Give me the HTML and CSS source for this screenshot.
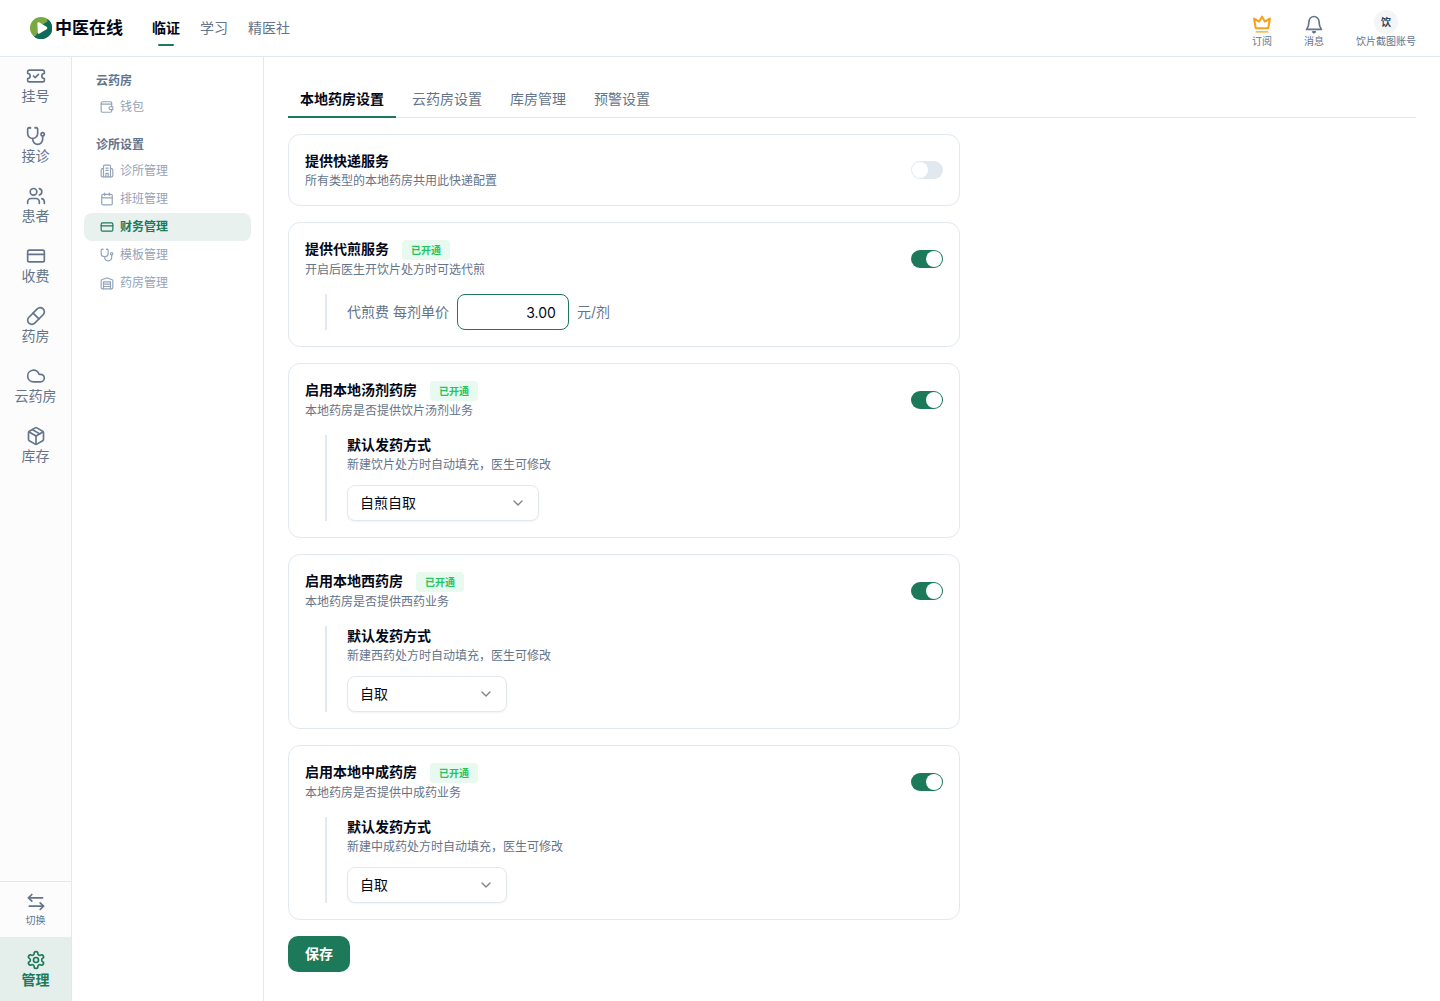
FILE: index.html
```html
<!DOCTYPE html>
<html lang="zh-CN">
<head>
<meta charset="utf-8">
<meta name="viewport" content="width=device-width, initial-scale=1">
<title>中医在线 - 财务管理</title>
<link rel="stylesheet" href="styles.css">
</head>
<body>
<svg class="sprite" aria-hidden="true">
  <symbol id="i-ticket" viewBox="0 0 24 24"><path d="M2 9a3 3 0 1 1 0 6v2a2 2 0 0 0 2 2h16a2 2 0 0 0 2-2v-2a3 3 0 1 1 0-6V7a2 2 0 0 0-2-2H4a2 2 0 0 0-2 2Z"/><path d="m9 12 2 2 4-4"/></symbol>
  <symbol id="i-steth" viewBox="0 0 24 24"><path d="M4.800 2.300A.3.3 0 1 0 5 2H4a2 2 0 0 0-2 2v5a6 6 0 0 0 6 6 6 6 0 0 0 6-6V4a2 2 0 0 0-2-2h-1a.2.2 0 1 0 .3.3"/><path d="M8 15v1a6 6 0 0 0 6 6 6 6 0 0 0 6-6v-4"/><circle cx="20" cy="10" r="2"/></symbol>
  <symbol id="i-users" viewBox="0 0 24 24"><path d="M16 21v-2a4 4 0 0 0-4-4H6a4 4 0 0 0-4 4v2"/><circle cx="9" cy="7" r="4"/><path d="M22 21v-2a4 4 0 0 0-3-3.870"/><path d="M16 3.130a4 4 0 0 1 0 7.750"/></symbol>
  <symbol id="i-card" viewBox="0 0 24 24"><rect width="20" height="14" x="2" y="5" rx="2"/><path d="M2 10h20"/></symbol>
  <symbol id="i-pill" viewBox="0 0 24 24"><path d="m10.500 20.500 10-10a4.950 4.950 0 1 0-7-7l-10 10a4.950 4.950 0 1 0 7 7Z"/><path d="m8.500 8.500 7 7"/></symbol>
  <symbol id="i-cloud" viewBox="0 0 24 24"><path d="M17.500 19H9a7 7 0 1 1 6.710-9h1.790a4.500 4.500 0 1 1 0 9Z"/></symbol>
  <symbol id="i-package" viewBox="0 0 24 24"><path d="M11 21.730a2 2 0 0 0 2 0l7-4A2 2 0 0 0 21 16V8a2 2 0 0 0-1-1.730l-7-4a2 2 0 0 0-2 0l-7 4A2 2 0 0 0 3 8v8a2 2 0 0 0 1 1.730z"/><path d="M12 22V12"/><path d="M3.290 7 12 12l8.710-5"/><path d="m7.500 4.270 9 5.150"/></symbol>
  <symbol id="i-swap" viewBox="0 0 24 24"><path d="M7 3 3 7l4 4"/><path d="M3 7h17"/><path d="m17 21 4-4-4-4"/><path d="M21 17H4"/></symbol>
  <symbol id="i-gear" viewBox="0 0 24 24"><path d="M12.220 2h-.440a2 2 0 0 0-2 2v.180a2 2 0 0 1-1 1.730l-.430.250a2 2 0 0 1-2 0l-.150-.080a2 2 0 0 0-2.730.730l-.220.380a2 2 0 0 0 .730 2.730l.150.100a2 2 0 0 1 1 1.720v.510a2 2 0 0 1-1 1.740l-.150.090a2 2 0 0 0-.730 2.730l.220.380a2 2 0 0 0 2.730.730l.150-.080a2 2 0 0 1 2 0l.430.250a2 2 0 0 1 1 1.730V20a2 2 0 0 0 2 2h.440a2 2 0 0 0 2-2v-.180a2 2 0 0 1 1-1.730l.430-.250a2 2 0 0 1 2 0l.150.080a2 2 0 0 0 2.730-.730l.220-.390a2 2 0 0 0-.730-2.730l-.150-.080a2 2 0 0 1-1-1.740v-.500a2 2 0 0 1 1-1.740l.150-.090a2 2 0 0 0 .730-2.730l-.220-.380a2 2 0 0 0-2.730-.730l-.150.080a2 2 0 0 1-2 0l-.430-.250a2 2 0 0 1-1-1.730V4a2 2 0 0 0-2-2z"/><circle cx="12" cy="12" r="3"/></symbol>
  <symbol id="i-wallet" viewBox="0 0 24 24"><path d="M20 11V5a2 2 0 0 0-2-2H4a2 2 0 0 0-2 2v14a2 2 0 0 0 2 2h14a2 2 0 0 0 2-2v-2"/><path d="M2 7h18"/><path d="M18 11.500a2.500 2.500 0 0 0 0 5h4v-5Z"/></symbol>
  <symbol id="i-clinic" viewBox="0 0 24 24"><path d="M6 22V4a2 2 0 0 1 2-2h8a2 2 0 0 1 2 2v18Z"/><path d="M6 8H4a2 2 0 0 0-2 2v10a2 2 0 0 0 2 2h2"/><path d="M18 8h2a2 2 0 0 1 2 2v10a2 2 0 0 1-2 2h-2"/><path d="M10 7h4"/><path d="M10 11h4"/><path d="M10 22v-6h4v6"/></symbol>
  <symbol id="i-calendar" viewBox="0 0 24 24"><path d="M8 2v4"/><path d="M16 2v4"/><rect width="18" height="18" x="3" y="4" rx="2"/><path d="M3 10h18"/></symbol>
  <symbol id="i-store" viewBox="0 0 24 24"><path d="M22 8.350V20a2 2 0 0 1-2 2H4a2 2 0 0 1-2-2V8.350A2 2 0 0 1 3.260 6.500l8-3.200a2 2 0 0 1 1.480 0l8 3.200A2 2 0 0 1 22 8.350Z"/><path d="M6 18h12"/><path d="M6 14h12"/><path d="M6 22V10h12v12"/></symbol>
  <symbol id="i-crown" viewBox="0 0 24 24"><path d="M12 3.200 15.500 9 21.500 5.500 19.500 17H4.500L2.500 5.500 8.500 9Z" stroke-width="2.500"/><path d="M5 21.500h14" stroke-width="1.500"/></symbol>
  <symbol id="i-bell" viewBox="0 0 24 24"><path d="M6 9a6 6 0 0 1 12 0c0 5 1 7 3 9.500H3C5 16 6 14 6 9Z"/><path d="M10.500 21.500h3L12 22.500Z"/></symbol>
  <symbol id="i-down" viewBox="0 0 24 24"><path d="m6 9 6 6 6-6"/></symbol>
</svg>

<header class="topbar">
  <a class="brand" href="#">
    <svg class="brand-mark" viewBox="0 0 22 22" aria-hidden="true">
      <circle cx="11" cy="11" r="11" fill="#78a942"/>
      <path d="M16.500 1.500A11 11 0 1 1 4 19.400C8 19 6.500 15 7.500 11L15 6C18 5 18 3 16.500 1.500Z" fill="#116b59"/>
      <path d="M7.500 6.500c0-1.300 1-1.700 2-1.100l7 4.300c1 .700 1 1.900 0 2.600l-7 4.300c-1 .600-2 .200-2-1.100z" fill="#fff"/>
    </svg>
    <span>中医在线</span>
  </a>
  <nav class="topnav" aria-label="主导航">
    <a class="is-active" href="#">临证</a>
    <a href="#">学习</a>
    <a href="#">精医社</a>
  </nav>
  <div class="actions">
    <button class="action action-gold" type="button"><svg class="icon"><use href="#i-crown"/></svg><span>订阅</span></button>
    <button class="action" type="button"><svg class="icon"><use href="#i-bell"/></svg><span>消息</span></button>
    <button class="action action-user" type="button"><span class="avatar">饮</span><span>饮片截图账号</span></button>
  </div>
</header>

<div class="shell">
  <nav class="rail" aria-label="功能">
    <div class="rail-main">
      <a href="#"><svg class="icon"><use href="#i-ticket"/></svg>挂号</a>
      <a href="#"><svg class="icon"><use href="#i-steth"/></svg>接诊</a>
      <a href="#"><svg class="icon"><use href="#i-users"/></svg>患者</a>
      <a href="#"><svg class="icon"><use href="#i-card"/></svg>收费</a>
      <a href="#"><svg class="icon"><use href="#i-pill"/></svg>药房</a>
      <a href="#"><svg class="icon"><use href="#i-cloud"/></svg>云药房</a>
      <a href="#"><svg class="icon"><use href="#i-package"/></svg>库存</a>
    </div>
    <button class="rail-switch" type="button"><svg class="icon"><use href="#i-swap"/></svg>切换</button>
    <a class="rail-manage" href="#"><svg class="icon"><use href="#i-gear"/></svg>管理</a>
  </nav>

  <nav class="subnav" aria-label="设置">
    <section>
      <h2>云药房</h2>
      <a href="#"><svg class="icon"><use href="#i-wallet"/></svg>钱包</a>
    </section>
    <section>
      <h2>诊所设置</h2>
      <a href="#"><svg class="icon"><use href="#i-clinic"/></svg>诊所管理</a>
      <a href="#"><svg class="icon"><use href="#i-calendar"/></svg>排班管理</a>
      <a class="is-active" href="#"><svg class="icon"><use href="#i-card"/></svg>财务管理</a>
      <a href="#"><svg class="icon"><use href="#i-steth"/></svg>模板管理</a>
      <a href="#"><svg class="icon"><use href="#i-store"/></svg>药房管理</a>
    </section>
  </nav>

  <main class="content">
    <div class="tabs" role="tablist">
      <button class="tab is-active" type="button" role="tab" aria-selected="true">本地药房设置</button>
      <button class="tab" type="button" role="tab" aria-selected="false">云药房设置</button>
      <button class="tab" type="button" role="tab" aria-selected="false">库房管理</button>
      <button class="tab" type="button" role="tab" aria-selected="false">预警设置</button>
    </div>

    <form class="settings">
      <section class="card">
        <div class="card-head">
          <div>
            <label class="title" for="express">提供快递服务</label>
            <p class="desc">所有类型的本地药房共用此快递配置</p>
          </div>
          <input class="switch" type="checkbox" role="switch" id="express">
        </div>
      </section>

      <section class="card">
        <div class="card-head">
          <div>
            <div class="title-row"><label class="title" for="decoct">提供代煎服务</label><span class="badge">已开通</span></div>
            <p class="desc">开启后医生开饮片处方时可选代煎</p>
          </div>
          <input class="switch" type="checkbox" role="switch" id="decoct" checked>
        </div>
        <div class="detail fee">
          <label for="price">代煎费 每剂单价</label>
          <input class="price" id="price" type="text" inputmode="decimal" value="3.00">
          <span>元/剂</span>
        </div>
      </section>

      <section class="card">
        <div class="card-head">
          <div>
            <div class="title-row"><label class="title" for="soup">启用本地汤剂药房</label><span class="badge">已开通</span></div>
            <p class="desc">本地药房是否提供饮片汤剂业务</p>
          </div>
          <input class="switch" type="checkbox" role="switch" id="soup" checked>
        </div>
        <div class="detail">
          <label class="title" for="soup-mode">默认发药方式</label>
          <p class="desc">新建饮片处方时自动填充，医生可修改</p>
          <div class="select select-wide">
            <select id="soup-mode"><option>自煎自取</option></select>
            <svg class="icon"><use href="#i-down"/></svg>
          </div>
        </div>
      </section>

      <section class="card">
        <div class="card-head">
          <div>
            <div class="title-row"><label class="title" for="west">启用本地西药房</label><span class="badge">已开通</span></div>
            <p class="desc">本地药房是否提供西药业务</p>
          </div>
          <input class="switch" type="checkbox" role="switch" id="west" checked>
        </div>
        <div class="detail">
          <label class="title" for="west-mode">默认发药方式</label>
          <p class="desc">新建西药处方时自动填充，医生可修改</p>
          <div class="select">
            <select id="west-mode"><option>自取</option></select>
            <svg class="icon"><use href="#i-down"/></svg>
          </div>
        </div>
      </section>

      <section class="card">
        <div class="card-head">
          <div>
            <div class="title-row"><label class="title" for="patent">启用本地中成药房</label><span class="badge">已开通</span></div>
            <p class="desc">本地药房是否提供中成药业务</p>
          </div>
          <input class="switch" type="checkbox" role="switch" id="patent" checked>
        </div>
        <div class="detail">
          <label class="title" for="patent-mode">默认发药方式</label>
          <p class="desc">新建中成药处方时自动填充，医生可修改</p>
          <div class="select">
            <select id="patent-mode"><option>自取</option></select>
            <svg class="icon"><use href="#i-down"/></svg>
          </div>
        </div>
      </section>

      <button class="save" type="button">保存</button>
    </form>
  </main>
</div>
</body>
</html>
```
FILE: styles.css
```css
:root {
  --green: #1c7a5a;
  --ink: #020817;
  --muted: #64748b;
  --faint: #94a3b8;
  --line: #e2e8f0;
}

* { box-sizing: border-box; }

body {
  margin: 0;
  min-height: 100vh;
  display: flex;
  flex-direction: column;
  background: #fff;
  color: var(--ink);
  font: 14px/20px Inter, "Noto Sans CJK SC", sans-serif;
}

a { color: inherit; text-decoration: none; }
h2, p { margin: 0; }
button, input, select { font: inherit; color: inherit; }
button { border: 0; padding: 0; background: none; cursor: pointer; }

.sprite { display: none; }

.icon {
  width: 20px;
  height: 20px;
  flex: none;
  fill: none;
  stroke: currentColor;
  stroke-width: 2;
  stroke-linecap: round;
  stroke-linejoin: round;
}

/* Top bar */
.topbar {
  display: flex;
  align-items: center;
  height: 57px;
  padding: 0 24px 0 30px;
  border-bottom: 1px solid var(--line);
}

.brand {
  display: flex;
  align-items: center;
  gap: 3px;
  font-size: 17px;
  font-weight: 600;
}
.brand-mark { width: 22px; height: 22px; }

.topnav {
  display: flex;
  gap: 20px;
  margin-left: 29px;
  color: var(--muted);
}
.topnav a {
  display: flex;
  flex-direction: column;
  align-items: center;
  padding: 8px 0;
}
.topnav .is-active {
  position: relative;
  color: var(--ink);
  font-weight: 600;
}
.topnav .is-active::after {
  content: "";
  position: absolute;
  bottom: 0;
  width: 16px;
  height: 2px;
  border-radius: 1px;
  background: var(--green);
}

.actions {
  display: flex;
  align-items: flex-end;
  gap: 32px;
  margin-left: auto;
  padding-top: 2px;
}
.action {
  display: flex;
  flex-direction: column;
  align-items: center;
  color: var(--muted);
  font-size: 10px;
  line-height: 14px;
}
.action-gold .icon { color: #f9a11b; }
.avatar {
  width: 24px;
  height: 24px;
  border-radius: 50%;
  background: #f4f5f7;
  color: #334155;
  line-height: 24px;
  font-weight: 600;
}

/* Page frame */
.shell { flex: 1; display: flex; }

.rail {
  width: 72px;
  flex: none;
  display: flex;
  flex-direction: column;
  border-right: 1px solid var(--line);
  background: #fcfcfc;
  color: var(--muted);
}
.rail-main {
  flex: 1;
  display: flex;
  flex-direction: column;
  gap: 20px;
  padding-top: 9px;
}
.rail-main a, .rail-switch, .rail-manage {
  display: flex;
  flex-direction: column;
  align-items: center;
}
.rail-switch {
  height: 56px;
  padding-top: 10px;
  border-top: 1px solid var(--line);
  font-size: 10px;
  line-height: 16px;
}
.rail-manage {
  height: 64px;
  padding-top: 13px;
  background: #e4eeea;
  color: var(--green);
  font-weight: 600;
}

.subnav {
  width: 192px;
  flex: none;
  display: flex;
  flex-direction: column;
  gap: 14px;
  padding: 14px 12px;
  border-right: 1px solid var(--line);
  font-size: 12px;
  line-height: 18px;
}
.subnav h2 {
  margin-bottom: 2px;
  padding: 0 12px;
  color: var(--muted);
  font-size: 12px;
  line-height: 20px;
  font-weight: 600;
}
.subnav a {
  display: flex;
  align-items: center;
  gap: 6px;
  height: 28px;
  padding: 0 16px;
  border-radius: 8px;
  color: var(--faint);
}
.subnav .icon { width: 14px; height: 14px; }
.subnav .is-active { background: #e8f1ee; color: var(--green); font-weight: 600; }

/* Settings */
.content { flex: 1; min-width: 0; padding: 24px 24px 28px; }

.tabs {
  display: flex;
  gap: 4px;
  border-bottom: 1px solid var(--line);
}
.tab {
  height: 37px;
  margin-bottom: -1px;
  padding: 0 12px;
  border-bottom: 2px solid transparent;
  color: var(--muted);
}
.tab.is-active { border-color: var(--green); color: var(--ink); font-weight: 600; }

.settings {
  display: flex;
  flex-direction: column;
  align-items: flex-start;
  gap: 16px;
  max-width: 672px;
  margin-top: 16px;
}
.card {
  width: 100%;
  padding: 16px;
  border: 1px solid var(--line);
  border-radius: 12px;
}
.card-head { display: flex; align-items: center; justify-content: space-between; }
.title { display: block; font-weight: 600; }
.title-row { display: flex; gap: 13px; height: 21px; }
.desc {
  margin-bottom: -2px;
  color: var(--muted);
  font-size: 12px;
  line-height: 20px;
}
.badge {
  align-self: flex-end;
  padding: 0 9px;
  border-radius: 4px;
  background: #e8f9ef;
  color: #22c55e;
  font-size: 10px;
  font-weight: 600;
}

.switch {
  appearance: none;
  display: flex;
  align-items: center;
  width: 32px;
  height: 18px;
  margin: 0;
  padding: 0 1px;
  border-radius: 9px;
  background: var(--line);
}
.switch::before {
  content: "";
  width: 16px;
  height: 16px;
  border-radius: 50%;
  background: #fff;
}
.switch:checked { justify-content: flex-end; background: var(--green); }

.detail {
  margin: 16px 0 0 20px;
  padding-left: 20px;
  border-left: 2px solid var(--line);
}
.fee { display: flex; align-items: center; gap: 8px; color: var(--muted); }
.price {
  width: 112px;
  height: 36px;
  padding: 0 12px;
  border: 1px solid var(--green);
  border-radius: 8px;
  background: #fff;
  color: var(--ink);
  text-align: right;
}

.select {
  display: grid;
  align-items: center;
  width: 160px;
  margin-top: 12px;
}
.select-wide { width: 192px; }
.select select, .select .icon { grid-area: 1 / 1; }
.select select {
  appearance: none;
  width: 100%;
  height: 36px;
  padding: 0 12px;
  border: 1px solid var(--line);
  border-radius: 8px;
  background: #fff;
  box-shadow: 0 1px 2px rgba(0, 0, 0, 0.05);
}
.select .icon {
  width: 16px;
  height: 16px;
  margin-right: 13px;
  justify-self: end;
  opacity: 0.5;
  pointer-events: none;
}

.save {
  height: 36px;
  padding: 0 17px;
  border-radius: 10px;
  background: var(--green);
  color: #fff;
  font-weight: 600;
}
```
